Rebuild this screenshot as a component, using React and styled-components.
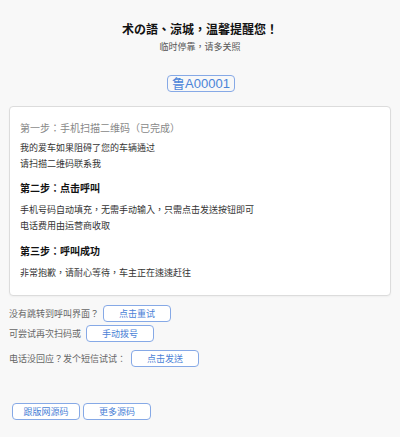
import React from 'react';
import styled, { createGlobalStyle } from 'styled-components';

const GlobalStyle = createGlobalStyle`
  html, body {
    margin: 0;
    padding: 0;
    background: #f8f8f8;
    font-family: 'Liberation Sans', 'Noto Sans CJK TC', sans-serif;
  }
`;

const Page = styled.div`
  width: 400px;
  min-height: 437px;
  background: #f8f8f8;
  padding-top: 22px;
  box-sizing: border-box;
`;

const Header = styled.div`
  display: flex;
  flex-direction: column;
  align-items: center;
  gap: 2px;
`;

const Title = styled.h1`
  margin: 0;
  font-size: 12px;
  line-height: 16px;
  font-weight: bold;
  color: #111;
`;

const Subtitle = styled.div`
  font-size: 9px;
  line-height: 14px;
  color: #555;
`;

const PlateRow = styled.div`
  display: flex;
  justify-content: center;
  margin-top: 21px;
  padding-left: 2px;
`;

const Plate = styled.div`
  height: 17px;
  box-sizing: border-box;
  padding: 0 4px;
  border: 1px solid #86a9e6;
  border-radius: 4px;
  font-size: 13px;
  line-height: 15px;
  color: #4a84d8;
`;

const Card = styled.div`
  margin: 14px 9px 0;
  padding: 15px 10px 14px;
  background: #fff;
  border: 1px solid #dcdcdc;
  border-radius: 4px;
  box-shadow: 0 1px 2px rgba(0, 0, 0, 0.04);
`;

const StepDone = styled.div`
  font-size: 10px;
  line-height: 14px;
  color: #888;
  margin-bottom: 4px;
`;

const StepTitle = styled.div`
  font-size: 10px;
  line-height: 16px;
  font-weight: bold;
  color: #111;
  margin-top: ${({ $top }) => $top}px;
  margin-bottom: 5px;
`;

const Line = styled.div`
  font-size: 9px;
  line-height: 16px;
  color: #333;
`;

const Actions = styled.div`
  display: flex;
  flex-direction: column;
  align-items: flex-start;
  padding-left: 9px;
  margin-top: 9px;
`;

const ActionRow = styled.div`
  display: flex;
  align-items: center;
  gap: ${({ $gap }) => $gap || 4}px;
  margin-top: ${({ $top }) => $top || 0}px;
`;

const Label = styled.span`
  font-size: 9px;
  color: #666;
`;

const Button = styled.button`
  width: 68px;
  height: 17px;
  box-sizing: border-box;
  padding: 0;
  background: #fff;
  border: 1px solid #86a9e6;
  border-radius: 4px;
  font-family: inherit;
  font-size: 9px;
  color: #4a7fd6;
  cursor: pointer;
`;

const Footer = styled.div`
  display: flex;
  gap: 3px;
  padding-left: 12px;
  margin-top: 36px;
`;

const App = () => {
  return (
    <Page>
      <GlobalStyle />
      <Header>
        <Title>术の語、涼城，温馨提醒您！</Title>
        <Subtitle>临时停靠，请多关照</Subtitle>
      </Header>
      <PlateRow>
        <Plate>鲁A00001</Plate>
      </PlateRow>
      <Card>
        <StepDone>第一步：手机扫描二维码（已完成）</StepDone>
        <Line>我的爱车如果阻碍了您的车辆通过</Line>
        <Line>请扫描二维码联系我</Line>
        <StepTitle $top={9}>第二步：点击呼叫</StepTitle>
        <Line>手机号码自动填充，无需手动输入，只需点击发送按钮即可</Line>
        <Line>电话费用由运营商收取</Line>
        <StepTitle $top={10}>第三步：呼叫成功</StepTitle>
        <Line>非常抱歉，请耐心等待，车主正在速速赶往</Line>
      </Card>
      <Actions>
        <ActionRow>
          <Label>没有跳转到呼叫界面？</Label>
          <Button>点击重试</Button>
        </ActionRow>
        <ActionRow $top={3} $gap={5}>
          <Label>可尝试再次扫码或</Label>
          <Button>手动拨号</Button>
        </ActionRow>
        <ActionRow $top={8} $gap={5}>
          <Label>电话没回应？发个短信试试：</Label>
          <Button>点击发送</Button>
        </ActionRow>
      </Actions>
      <Footer>
        <Button>跟版网源码</Button>
        <Button>更多源码</Button>
      </Footer>
    </Page>
  );
};

export default App;
